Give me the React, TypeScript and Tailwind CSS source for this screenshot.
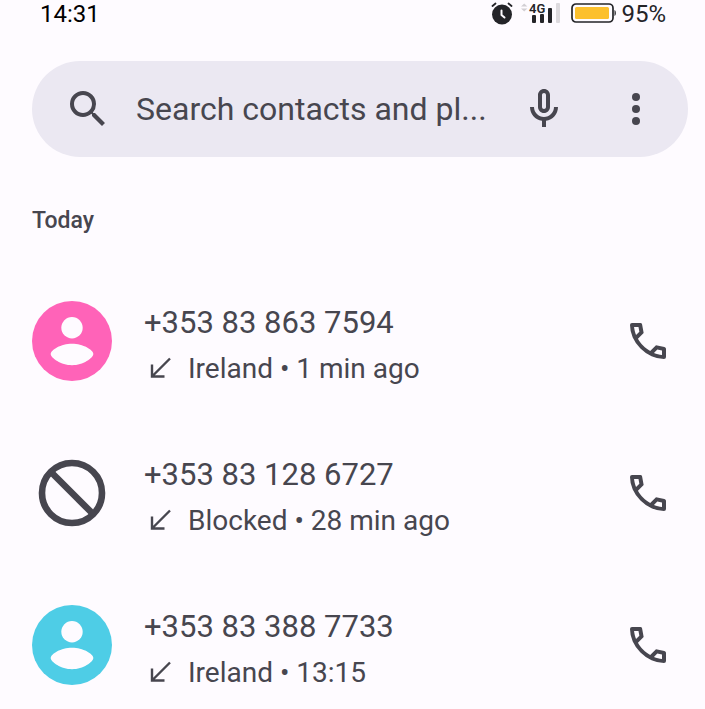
import React from "react";

type Call = {
  number: string;
  detail: string;
  avatar: "pink" | "cyan" | "blocked";
};

const calls: Call[] = [
  { number: "+353 83 863 7594", detail: "Ireland • 1 min ago", avatar: "pink" },
  { number: "+353 83 128 6727", detail: "Blocked • 28 min ago", avatar: "blocked" },
  { number: "+353 83 388 7733", detail: "Ireland • 13:15", avatar: "cyan" },
];

function StatusBar() {
  return (
    <div className="flex h-7 items-center justify-between pl-10 pr-[39px] text-2xl text-black">
      <span>14:31</span>
      <div className="flex items-center text-[#242428]">
        {/* Alarm */}
        <svg className="h-6 w-6" viewBox="0 0 24 24" fill="none">
          <circle cx="11" cy="12.5" r="10" fill="currentColor" />
          <path
            d="M1.5 4 4.5 1.5M17.5 1.5l3 2.5"
            stroke="currentColor"
            strokeWidth="1.8"
            strokeLinecap="round"
          />
          <path
            d="M10.5 8.5v4.5l3 2.5"
            stroke="#fefbff"
            strokeWidth="2"
            strokeLinecap="round"
            strokeLinejoin="round"
          />
        </svg>
        {/* Mobile signal */}
        <svg className="ml-1.5 h-6 w-10" viewBox="0 0 40 24">
          <path d="M0 4.5 3.2 1.5l3.2 3zM0 6.5h6.4l-3.2 3z" fill="#d2cfd4" />
          <text
            x="8"
            y="11"
            fontSize="13"
            fontWeight="600"
            fontFamily="Roboto, sans-serif"
            fill="currentColor"
          >
            4G
          </text>
          <rect x="11" y="13" width="4" height="8" rx="1" fill="currentColor" />
          <rect x="19" y="12" width="4" height="9" rx="1" fill="currentColor" />
          <rect x="27" y="6" width="4" height="15" rx="1" fill="currentColor" />
          <rect x="35" y="1" width="4" height="20" rx="1" fill="#dddade" />
        </svg>
        {/* Battery */}
        <svg className="ml-2.5 h-6 w-[46px]" viewBox="0 0 46 24">
          <rect
            x="1"
            y="2"
            width="41"
            height="18"
            rx="4"
            fill="none"
            stroke="currentColor"
            strokeWidth="1.7"
          />
          <rect x="4" y="5" width="34" height="12" rx="1.5" fill="#fcc02e" />
          <path d="M43.5 8c1.8.5 1.8 5.5 0 6z" fill="currentColor" />
        </svg>
        <span className="ml-1">95%</span>
      </div>
    </div>
  );
}

function SearchBar() {
  return (
    <div className="mt-[33px] flex h-24 items-center rounded-full bg-[#ebe8f2] pl-8 pr-7">
      <label htmlFor="search" className="shrink-0">
        <svg className="h-12 w-12" viewBox="0 0 24 24" fill="currentColor">
          <path d="M15.5 14h-.79l-.28-.27A6.471 6.471 0 0 0 16 9.5 6.5 6.5 0 1 0 9.5 16c1.61 0 3.09-.59 4.23-1.57l.27.28v.79l5 4.99L20.49 19l-4.99-5zm-6 0C7.01 14 5 11.99 5 9.5S7.01 5 9.5 5 14 7.01 14 9.5 11.99 14 9.5 14z" />
        </svg>
      </label>
      <input
        id="search"
        type="text"
        aria-label="Search contacts and places"
        placeholder="Search contacts and pl..."
        className="ml-6 h-12 min-w-0 flex-1 bg-transparent text-[32px] outline-none placeholder:text-[#47464f]"
      />
      <button type="button" aria-label="Voice search" className="ml-2 shrink-0">
        <svg className="h-12 w-12" viewBox="0 0 24 24" fill="currentColor">
          <path d="M12 14c1.66 0 3-1.34 3-3V5c0-1.66-1.34-3-3-3S9 3.34 9 5v6c0 1.66 1.34 3 3 3zm-1-9c0-.55.45-1 1-1s1 .45 1 1v6c0 .55-.45 1-1 1s-1-.45-1-1V5zm6 6c0 2.76-2.24 5-5 5s-5-2.24-5-5H5c0 3.53 2.61 6.43 6 6.92V21h2v-3.08c3.39-.49 6-3.39 6-6.92h-2z" />
        </svg>
      </button>
      <button type="button" aria-label="More options" className="ml-11 shrink-0">
        <svg className="h-12 w-12" viewBox="0 0 24 24" fill="currentColor">
          <circle cx="12" cy="6" r="2" />
          <circle cx="12" cy="12" r="2" />
          <circle cx="12" cy="18" r="2" />
        </svg>
      </button>
    </div>
  );
}

function Avatar({ kind }: { kind: Call["avatar"] }) {
  if (kind === "blocked") {
    return (
      <svg
        className="h-20 w-20 shrink-0"
        viewBox="0 0 80 80"
        fill="none"
        stroke="currentColor"
        strokeWidth="6.6"
      >
        <circle cx="40" cy="40" r="30" />
        <path d="m19 19 42 42" />
      </svg>
    );
  }
  return (
    <svg className="h-20 w-20 shrink-0" viewBox="0 0 80 80">
      <circle cx="40" cy="40" r="40" fill={kind === "pink" ? "#ff63b8" : "#4ecde6"} />
      <circle cx="40" cy="26.7" r="10.7" fill="#fefbff" />
      <path
        d="M40 42.8C51 42.8 61.3 49 61.3 53C61.3 57 51 64.2 40 64.2C29 64.2 18.7 57 18.7 53C18.7 49 29 42.8 40 42.8z"
        fill="#fefbff"
      />
    </svg>
  );
}

function CallRow({ call }: { call: Call }) {
  return (
    <li className="flex h-[100px] items-center">
      <Avatar kind={call.avatar} />
      <div className="ml-8 min-w-0 flex-1 pt-2.5">
        <p className="text-[31px] leading-[46px]">{call.number}</p>
        <div className="flex items-center gap-3">
          <svg
            className="h-8 w-8 shrink-0"
            viewBox="0 0 32 32"
            fill="none"
            stroke="currentColor"
            strokeWidth="2.4"
          >
            <path d="M26 5.5 8.5 23M8 11.500V23.500h12.500" />
          </svg>
          <p className="text-[28px] leading-[46px]">{call.detail}</p>
        </div>
      </div>
      <button type="button" aria-label={`Call ${call.number}`} className="mr-4 shrink-0">
        <svg className="h-12 w-12" viewBox="0 0 24 24" fill="currentColor">
          <path d="M19.95 21q-3.125 0-6.175-1.362T8.225 15.775 4.363 10.225 3 4.05V4q0-1 1-1h4.2q.7 0 .85.7l.775 4.325-2.85 2.875q.55.975 1.225 1.85t1.45 1.625q.725.725 1.588 1.363T13.1 17l2.9-2.9 4.2.85q.8.15.8.95V20q0 1-1.05 1zM6.025 9l1.65-1.65L7.25 5H5.025q.125 1.025.35 2.025T6.025 9zm8.95 8.95q.975.425 1.988.675T19 18.95v-2.2l-2.35-.475z" />
        </svg>
      </button>
    </li>
  );
}

export default function App() {
  return (
    <div className="min-h-screen bg-[#fefbff] font-['Roboto',sans-serif] text-[#47464f]">
      <StatusBar />
      <main className="pl-8 pr-[17px]">
        <SearchBar />
        <h2 className="mt-12 text-[23px] font-medium leading-8">Today</h2>
        <ul className="mt-[54px] flex flex-col gap-[52px]">
          {calls.map((call) => (
            <CallRow key={call.number} call={call} />
          ))}
        </ul>
      </main>
    </div>
  );
}
